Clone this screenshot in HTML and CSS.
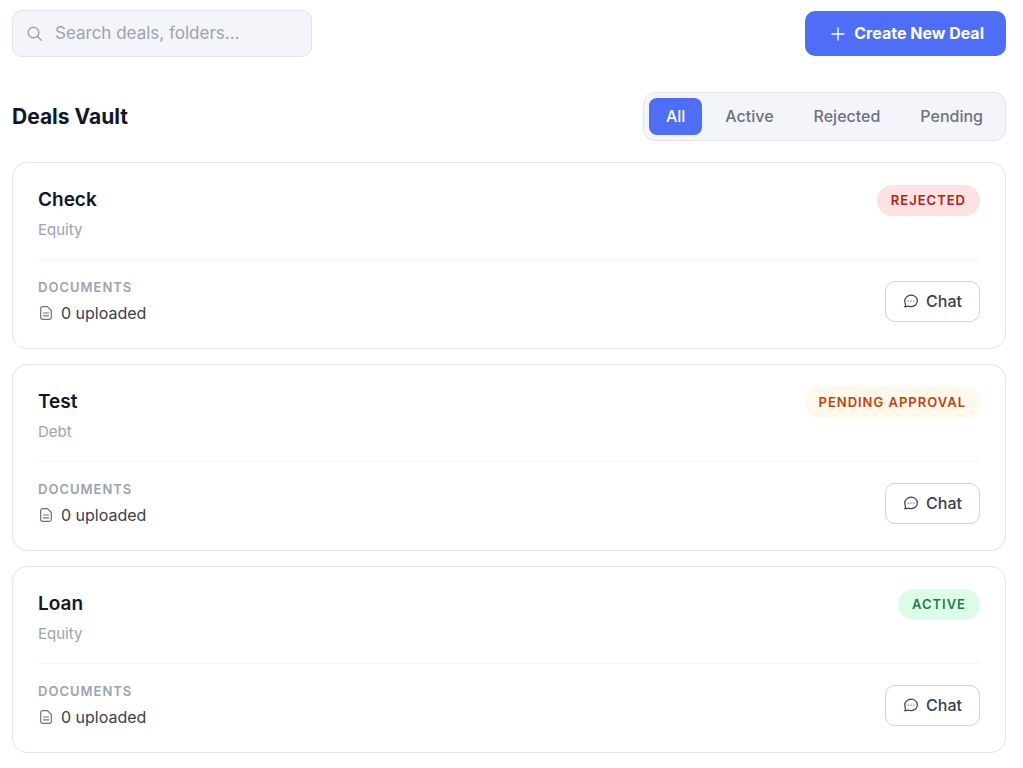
FILE: index.html
```html
<!DOCTYPE html>
<html lang="en">
<head>
    <meta charset="UTF-8">
    <meta name="viewport" content="width=device-width, initial-scale=1.0">
    <title>Deals Vault</title>
    <link rel="stylesheet" href="styles.css">
</head>
<body>

<!-- Shared icons -->
<svg class="icon-defs" width="0" height="0" aria-hidden="true">
    <symbol id="icon-file" viewBox="0 0 16 16">
        <path d="M9.500 1.700H4.500a1.800 1.800 0 0 0-1.800 1.800v9a1.800 1.800 0 0 0 1.800 1.800h7a1.800 1.800 0 0 0 1.800-1.800V5.500z"/>
        <path d="M5.500 8h5M5.500 10.900h5"/>
    </symbol>
    <symbol id="icon-chat" viewBox="0 0 16 16">
        <path d="M8.200 2.200c3.500 0 6.100 2.500 6.100 5.700s-2.600 5.700-6.100 5.700c-1.100 0-2.100-.2-3-.7-1 .6-2.300.9-3.500.8.6-.7.9-1.500.9-2.300-.5-1-.8-2.200-.8-3.500 0-3.200 2.900-5.700 6.400-5.700z"/>
        <path d="M5.200 8h.1M8 8h.1M10.800 8h.1"/>
    </symbol>
</svg>

<header class="topbar">
    <div class="search">
        <svg class="search-icon" viewBox="0 0 16 16" aria-hidden="true">
            <circle cx="6.500" cy="6.500" r="5.300"/>
            <path d="M10.500 10.500l3.800 3.800"/>
        </svg>
        <input type="search" class="search-input" placeholder="Search deals, folders..." aria-label="Search deals">
    </div>
    <button type="button" class="create-btn">
        <svg class="plus-icon" viewBox="0 0 16 16" aria-hidden="true"><path d="M8 2v12M2 8h12"/></svg>
        Create New Deal
    </button>
</header>

<main>
    <div class="vault-head">
        <h1>Deals Vault</h1>
        <div class="tabs">
            <button type="button" class="tab selected">All</button>
            <button type="button" class="tab">Active</button>
            <button type="button" class="tab">Rejected</button>
            <button type="button" class="tab">Pending</button>
        </div>
    </div>

    <div class="deal-list">
        <article class="deal">
            <div class="deal-top">
                <div>
                    <h2>Check</h2>
                    <p class="deal-type">Equity</p>
                </div>
                <span class="badge rejected">Rejected</span>
            </div>
            <div class="deal-bottom">
                <div>
                    <p class="docs-label">Documents</p>
                    <p class="docs-count"><svg class="icon" aria-hidden="true"><use href="#icon-file"/></svg>0 uploaded</p>
                </div>
                <button type="button" class="chat-btn"><svg class="icon" aria-hidden="true"><use href="#icon-chat"/></svg>Chat</button>
            </div>
        </article>

        <article class="deal">
            <div class="deal-top">
                <div>
                    <h2>Test</h2>
                    <p class="deal-type">Debt</p>
                </div>
                <span class="badge pending">Pending Approval</span>
            </div>
            <div class="deal-bottom">
                <div>
                    <p class="docs-label">Documents</p>
                    <p class="docs-count"><svg class="icon" aria-hidden="true"><use href="#icon-file"/></svg>0 uploaded</p>
                </div>
                <button type="button" class="chat-btn"><svg class="icon" aria-hidden="true"><use href="#icon-chat"/></svg>Chat</button>
            </div>
        </article>

        <article class="deal">
            <div class="deal-top">
                <div>
                    <h2>Loan</h2>
                    <p class="deal-type">Equity</p>
                </div>
                <span class="badge active">Active</span>
            </div>
            <div class="deal-bottom">
                <div>
                    <p class="docs-label">Documents</p>
                    <p class="docs-count"><svg class="icon" aria-hidden="true"><use href="#icon-file"/></svg>0 uploaded</p>
                </div>
                <button type="button" class="chat-btn"><svg class="icon" aria-hidden="true"><use href="#icon-chat"/></svg>Chat</button>
            </div>
        </article>
    </div>
</main>

</body>
</html>
```
FILE: styles.css
```css
* {
    box-sizing: border-box;
}
body {
    font-family: Inter, sans-serif;
    font-size: 16px;
    line-height: 24px;
    background-color: #fff;
    color: #0f172a;
    margin: 0;
    padding: 10px 17px 14px 12px;
}
h1, h2, p {
    margin: 0;
}
button, input {
    font-family: inherit;
    font-size: 16px;
    line-height: 25px;
}
button {
    cursor: pointer;
}
svg {
    fill: none;
    stroke: currentColor;
    stroke-linecap: round;
    stroke-linejoin: round;
    flex-shrink: 0;
}
.icon-defs {
    display: none;
}

/* Top bar */
.topbar {
    display: flex;
    justify-content: space-between;
    align-items: center;
    margin-bottom: 35px;
}
.search {
    display: flex;
    align-items: center;
    gap: 12px;
    width: 300px;
    padding: 10px 14px;
    background-color: #f4f5fa;
    border: 1px solid #e2e3eb;
    border-radius: 10px;
    color: #9ca3af;
}
.search-icon {
    width: 16px;
    height: 16px;
    stroke-width: 1.4;
}
.search-input {
    flex: 1;
    min-width: 0;
    height: 25px;
    padding: 0;
    border: none;
    outline: none;
    background: none;
    color: #0f172a;
    font-size: 17px;
}
.search-input::placeholder {
    color: #9ca3af;
}
.create-btn {
    display: flex;
    align-items: center;
    gap: 8px;
    padding: 10px 22px 10px 25px;
    border: none;
    border-radius: 10px;
    background-color: #4f6ef7;
    color: #fff;
    font-weight: 700;
}
.plus-icon {
    width: 16px;
    height: 16px;
    stroke-width: 1.4;
}

/* Title and filter tabs */
.vault-head {
    display: flex;
    justify-content: space-between;
    align-items: center;
    margin-bottom: 21px;
}
h1 {
    font-size: 21px;
    line-height: 28px;
    font-weight: 700;
}
.tabs {
    display: flex;
    gap: 6px;
    padding: 5px;
    background-color: #f4f5fa;
    border: 1px solid #e2e3eb;
    border-radius: 12px;
}
.tab {
    padding: 6px 17px;
    border: none;
    border-radius: 8px;
    background: none;
    color: #6b7280;
    font-weight: 500;
}
.tab.selected {
    background-color: #4f6ef7;
    color: #fff;
}

/* Deal cards */
.deal-list {
    display: flex;
    flex-direction: column;
    gap: 15px;
}
.deal {
    padding: 22px 25px 21px;
    border: 1px solid #e2e3eb;
    border-radius: 15px;
}
.deal-top {
    display: flex;
    justify-content: space-between;
    align-items: flex-start;
    padding-bottom: 17px;
    border-bottom: 1px solid #f3f4f6;
}
h2 {
    font-size: 19px;
    line-height: 30px;
    font-weight: 600;
    margin-bottom: 3px;
}
.deal-type {
    font-size: 15px;
    color: #9ca3af;
}
.badge {
    padding: 3px 14px;
    border-radius: 16px;
    font-size: 13px;
    line-height: 25px;
    font-weight: 600;
    letter-spacing: 1px;
    text-transform: uppercase;
}
.badge.rejected {
    background-color: #fee2e2;
    color: #b91c1c;
}
.badge.pending {
    background-color: #fff8eb;
    color: #c2410c;
}
.badge.active {
    background-color: #dcfce7;
    color: #1f7a4d;
}
.deal-bottom {
    display: flex;
    justify-content: space-between;
    align-items: center;
    padding-top: 15px;
}
.docs-label {
    font-size: 13px;
    font-weight: 600;
    letter-spacing: 1px;
    text-transform: uppercase;
    color: #9ca3af;
}
.docs-count {
    display: flex;
    align-items: center;
    gap: 7px;
    line-height: 28px;
    color: #374151;
}
.icon {
    width: 16px;
    height: 16px;
    stroke-width: 1.2;
}
.docs-count .icon {
    color: #6b7280;
}
.chat-btn {
    display: flex;
    align-items: center;
    gap: 7px;
    padding: 7px 17px;
    border: 1px solid #d1d1dd;
    border-radius: 10px;
    background-color: #fff;
    color: #374151;
    font-weight: 500;
}
```
